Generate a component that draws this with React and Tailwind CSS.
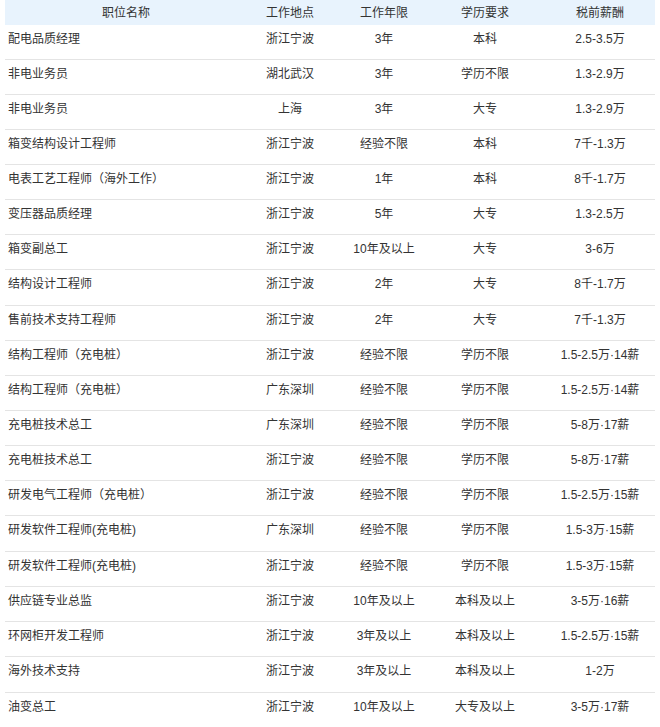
import React from "react";

const rows = [
  ["配电品质经理", "浙江宁波", "3年", "本科", "2.5-3.5万"],
  ["非电业务员", "湖北武汉", "3年", "学历不限", "1.3-2.9万"],
  ["非电业务员", "上海", "3年", "大专", "1.3-2.9万"],
  ["箱变结构设计工程师", "浙江宁波", "经验不限", "本科", "7千-1.3万"],
  ["电表工艺工程师（海外工作）", "浙江宁波", "1年", "本科", "8千-1.7万"],
  ["变压器品质经理", "浙江宁波", "5年", "大专", "1.3-2.5万"],
  ["箱变副总工", "浙江宁波", "10年及以上", "大专", "3-6万"],
  ["结构设计工程师", "浙江宁波", "2年", "大专", "8千-1.7万"],
  ["售前技术支持工程师", "浙江宁波", "2年", "大专", "7千-1.3万"],
  ["结构工程师（充电桩）", "浙江宁波", "经验不限", "学历不限", "1.5-2.5万·14薪"],
  ["结构工程师（充电桩）", "广东深圳", "经验不限", "学历不限", "1.5-2.5万·14薪"],
  ["充电桩技术总工", "广东深圳", "经验不限", "学历不限", "5-8万·17薪"],
  ["充电桩技术总工", "浙江宁波", "经验不限", "学历不限", "5-8万·17薪"],
  ["研发电气工程师（充电桩）", "浙江宁波", "经验不限", "学历不限", "1.5-2.5万·15薪"],
  ["研发软件工程师(充电桩)", "广东深圳", "经验不限", "学历不限", "1.5-3万·15薪"],
  ["研发软件工程师(充电桩)", "浙江宁波", "经验不限", "学历不限", "1.5-3万·15薪"],
  ["供应链专业总监", "浙江宁波", "10年及以上", "本科及以上", "3-5万·16薪"],
  ["环网柜开发工程师", "浙江宁波", "3年及以上", "本科及以上", "1.5-2.5万·15薪"],
  ["海外技术支持", "浙江宁波", "3年及以上", "本科及以上", "1-2万"],
  ["油变总工", "浙江宁波", "10年及以上", "大专及以上", "3-5万·17薪"],
];

const grid = "grid grid-cols-[242px_86px_102px_100px_120px]";
const tall = new Set([7, 14, 18]);

export default function App() {
  return (
    <div
      className="w-[660px] h-[727px] overflow-hidden bg-white text-[12px] text-[#333]"
      style={{ fontFamily: '"Liberation Sans", "Noto Sans CJK SC", sans-serif' }}
    >
      <div className="ml-[5px] w-[650px]">
        <div className={`${grid} h-[25px] items-center bg-[#e8f3fd] leading-[14px]`}>
          <div className="text-center">职位名称</div>
          <div className="text-center">工作地点</div>
          <div className="text-center">工作年限</div>
          <div className="text-center">学历要求</div>
          <div className="text-center pl-[10px]">税前薪酬</div>
        </div>
        {rows.map((r, i) => (
          <div
            key={i}
            className={`${grid} ${tall.has(i) ? "h-[36px]" : "h-[35px]"} border-b border-[#e4e4e4] pt-[7px] leading-[14px]`}
          >
            <div className="pl-[3px] whitespace-nowrap">{r[0]}</div>
            <div className="text-center">{r[1]}</div>
            <div className="text-center">{r[2]}</div>
            <div className="text-center">{r[3]}</div>
            <div className="text-center pl-[10px]">{r[4]}</div>
          </div>
        ))}
      </div>
    </div>
  );
}
